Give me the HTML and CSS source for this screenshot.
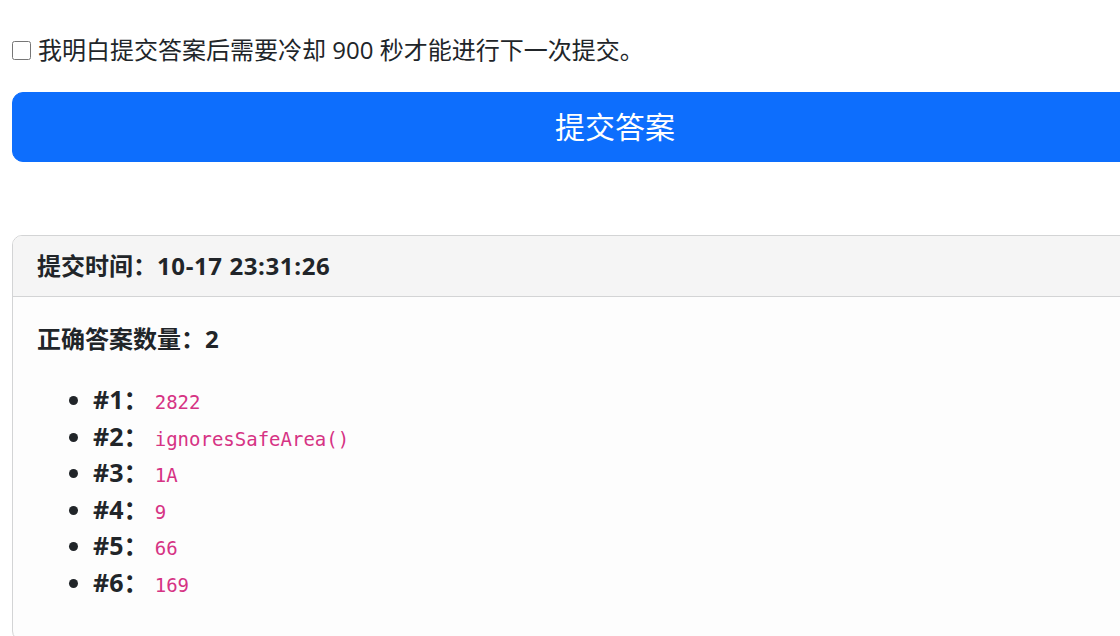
FILE: index.html
```html
<!DOCTYPE html>
<html lang="zh-CN">
<head>
<meta charset="utf-8">
<title>提交答案</title>
<link rel="stylesheet" href="styles.css">
</head>
<body>
<div class="page">
  <label class="agree">
    <input type="checkbox" class="agree-box">
    <span>我明白提交答案后需要冷却 900 秒才能进行下一次提交。</span>
  </label>
  <button class="submit-btn" type="button">提交答案</button>

  <div class="card">
    <div class="card-header">提交时间：<span class="time">10-17 23:31:26</span></div>
    <div class="card-body">
      <div class="count">正确答案数量：2</div>
      <ul class="answers">
        <li><strong>#1：</strong> <code>2822</code></li>
        <li><strong>#2：</strong> <code>ignoresSafeArea()</code></li>
        <li><strong>#3：</strong> <code>1A</code></li>
        <li><strong>#4：</strong> <code>9</code></li>
        <li><strong>#5：</strong> <code>66</code></li>
        <li><strong>#6：</strong> <code>169</code></li>
      </ul>
    </div>
  </div>
</div>
</body>
</html>
```

FILE: styles.css
```css
html, body {
  margin: 0;
  padding: 0;
  overflow: hidden;
  background: #ffffff;
}
body {
  font-family: "Open Sans", "Noto Sans CJK SC", sans-serif;
  font-size: 24px;
  line-height: 1.5;
  color: #212529;
}
.page {
  width: 1206px;
  padding: 32px 12px 0 12px;
  display: flex;
  flex-direction: column;
}
.agree {
  display: flex;
  align-items: center;
  gap: 7px;
  height: 36px;
  margin-bottom: 24px;
}
.agree-box {
  margin: 0;
  width: 19px;
  height: 19px;
  flex: none;
}
.submit-btn {
  display: block;
  width: 100%;
  height: 70px;
  border: 1px solid #0d6efd;
  background: #0d6efd;
  color: #ffffff;
  font-family: inherit;
  font-size: 30px;
  line-height: 1;
  border-radius: 11px;
  padding: 0;
  margin: 0 0 73px 0;
}
.card {
  border: 1px solid #d3d4d5;
  border-radius: 10px;
  background: #fdfdfd;
  overflow: hidden;
}
.card-header {
  background: #f5f5f5;
  border-bottom: 1px solid #d3d4d5;
  padding: 12px 24px;
  font-weight: 700;
  height: 36px;
}
.time {
  letter-spacing: 0.6px;
}
.card-body {
  padding: 24px 24px 40px 24px;
}
.count {
  font-weight: 700;
  margin-bottom: 24px;
}
.answers {
  margin: 0;
  padding-left: 56px;
}
.answers li {
  height: 36.5px;
  line-height: 36.5px;
}
.answers strong {
  font-weight: 700;
  font-size: 25px;
}
code {
  font-family: "DejaVu Sans Mono", monospace;
  font-size: 19px;
  line-height: 1;
  color: #d63384;
}
```
